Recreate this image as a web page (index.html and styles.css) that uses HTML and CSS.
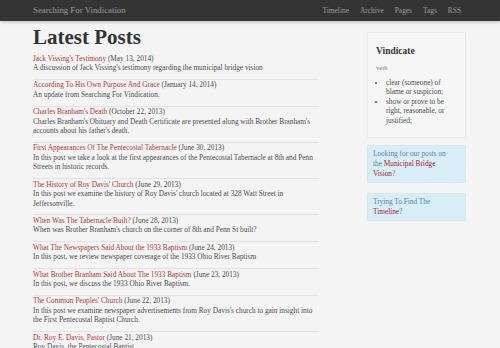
FILE: index.html
```html
<!DOCTYPE html>
<html>
<head>
<meta charset="utf-8">
<link rel="stylesheet" href="styles.css">
</head>
<body>
<header class="navbar">
  <div class="nav-inner">
    <a class="brand" href="#">Searching For Vindication</a>
    <nav class="nav-links">
      <a href="#">Timeline</a>
      <a href="#">Archive</a>
      <a href="#">Pages</a>
      <a href="#">Tags</a>
      <a href="#">RSS</a>
    </nav>
  </div>
</header>
<div class="container">
  <main class="main">
    <h1 class="title">Latest Posts</h1>
    <ul class="posts">
      <li><a href="#">Jack Vissing's Testimony</a> <span class="date">(May 13, 2014)</span><br>A discussion of Jack Vissing's testimony regarding the municipal bridge vision</li>
      <li><a href="#">According To His Own Purpose And Grace</a> <span class="date">(January 14, 2014)</span><br>An update from Searching For Vindication.</li>
      <li><a href="#">Charles Branham's Death</a> <span class="date">(October 22, 2013)</span><br>Charles Branham's Obituary and Death Certificate are presented along with Brother Branham's accounts about his father's death.</li>
      <li><a href="#">First Appearances Of The Pentecostal Tabernacle</a> <span class="date">(June 30, 2013)</span><br>In this post we take a look at the first appearances of the Pentecostal Tabernacle at 8th and Penn Streets in historic records.</li>
      <li><a href="#">The History of Roy Davis' Church</a> <span class="date">(June 29, 2013)</span><br>In this post we examine the history of Roy Davis' church located at 328 Watt Street in Jeffersonville.</li>
      <li><a href="#">When Was The Tabernacle Built?</a> <span class="date">(June 28, 2013)</span><br>When was Brother Branham's church on the corner of 8th and Penn St built?</li>
      <li><a href="#">What The Newspapers Said About the 1933 Baptism</a> <span class="date">(June 24, 2013)</span><br>In this post, we review newspaper coverage of the 1933 Ohio River Baptism</li>
      <li><a href="#">What Brother Branham Said About The 1933 Baptism</a> <span class="date">(June 23, 2013)</span><br>In this post, we discuss the 1933 Ohio River Baptism.</li>
      <li><a href="#">The Common Peoples' Church</a> <span class="date">(June 22, 2013)</span><br>In this post we examine newspaper advertisements from Roy Davis's church to gain insight into the First Pentecostal Baptist Church.</li>
      <li><a href="#">Dr. Roy E. Davis, Pastor</a> <span class="date">(June 21, 2013)</span><br>Roy Davis, the Pentecostal Baptist</li>
    </ul>
  </main>
  <aside class="sidebar">
    <div class="well">
      <h3 class="well-title">Vindicate</h3>
      <p class="verb">verb</p>
      <ul class="defs">
        <li>clear (someone) of blame or suspicion;</li>
        <li>show or prove to be right, reasonable, or justified;</li>
      </ul>
    </div>
    <div class="info">Looking for our posts on the <a href="#">Municipal Bridge Vision</a>?</div>
    <div class="info">Trying To Find The <a href="#">Timeline</a>?</div>
  </aside>
</div>
</body>
</html>
```
FILE: styles.css
```css
html, body {
  margin: 0;
  padding: 0;
}
body {
  background: #f4f4f4;
  font-family: "Liberation Serif", "DejaVu Serif", serif;
  font-size: 7.3px;
  line-height: 9.5px;
  color: #4d4d4d;
}
a {
  text-decoration: none;
  color: #ad3838;
}
.navbar {
  height: 21px;
  background: #343434;
  box-shadow: 0 1px 3px rgba(0,0,0,0.25);
}
.nav-inner {
  width: 433px;
  margin-left: 33px;
  display: flex;
  align-items: center;
  height: 21px;
}
.brand {
  color: #9a9a9a;
  font-size: 8.8px;
}
.nav-links {
  margin-left: auto;
  display: flex;
  gap: 11px;
  padding-right: 5px;
}
.nav-links a {
  color: #9a9a9a;
  font-size: 7.4px;
}
.container {
  width: 433px;
  margin-left: 33px;
  display: flex;
  align-items: flex-start;
}
.main {
  width: 286px;
}
.title {
  margin: 4px 0 4px;
  font-size: 21px;
  line-height: 24px;
  color: #333;
  font-weight: bold;
}
.posts {
  list-style: none;
  margin: 0;
  padding: 0;
}
.posts li {
  padding: 0.5px 0 6.3px;
  border-bottom: 1px solid #e2e2e2;
}
.sidebar {
  margin-left: auto;
  width: 99px;
  padding-top: 11px;
}
.well {
  background: #f6f6f6;
  border: 1px solid #ebebeb;
  padding: 10px 8px 12px;
  margin-bottom: 7px;
}
.well-title {
  margin: 2px 0 6px;
  font-size: 9.5px;
  line-height: 12px;
  color: #333;
}
.verb {
  margin: 0 0 5px;
  font-size: 6.5px;
  color: #777;
}
.defs {
  margin: 0;
  padding-left: 10px;
  padding-right: 4px;
  color: #4d4d4d;
}
.info {
  background: #d9edf7;
  border: 1px solid #d3e8f3;
  color: #5089ab;
  line-height: 10px;
  padding: 3px 12px 3px 5px;
  margin-bottom: 10px;
}
.info a {
  color: #9e2437;
}
```
